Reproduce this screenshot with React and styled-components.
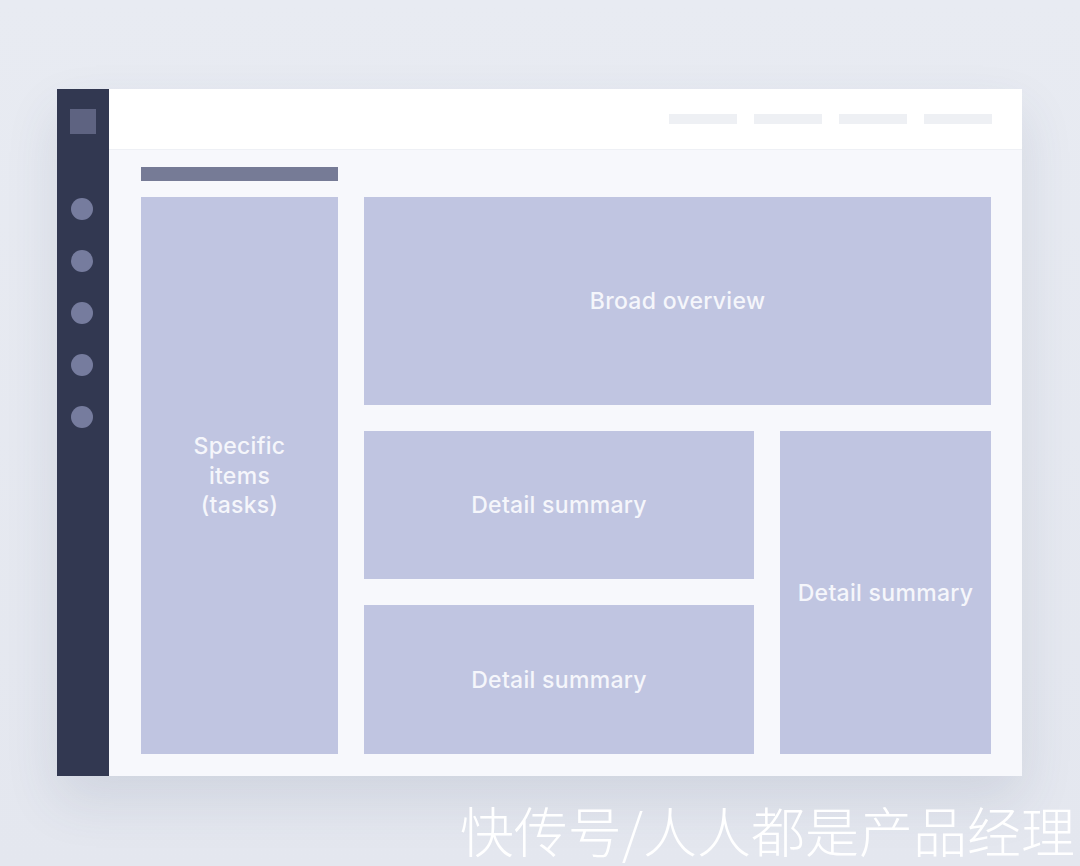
import styled, { createGlobalStyle } from "styled-components";

const GlobalStyle = createGlobalStyle`
  html, body {
    margin: 0;
    padding: 0;
    background: #e6e9f1;
  }
  body {
    font-family: "Inter", "Noto Sans", sans-serif;
  }
`;

const Page = styled.div`
  position: relative;
  width: 1080px;
  height: 866px;
  overflow: hidden;
  background: linear-gradient(180deg, #e8ebf2 0%, #e4e7ef 100%);
  padding: 89px 0 0 57px;
  box-sizing: border-box;
`;

const Window = styled.div`
  display: flex;
  width: 965px;
  height: 687px;
  box-shadow: 0 24px 50px rgba(60, 70, 110, 0.12);
`;

const Sidebar = styled.div`
  width: 52px;
  flex-shrink: 0;
  background: #323851;
  display: flex;
  flex-direction: column;
  align-items: center;
  padding-top: 20px;
  box-sizing: border-box;
`;

const Logo = styled.div`
  width: 26px;
  height: 25px;
  background: #5e6381;
  margin-bottom: 64px;
`;

const NavDots = styled.div`
  display: flex;
  flex-direction: column;
  gap: 30px;
  margin-right: 3px;
`;

const Dot = styled.div`
  width: 22px;
  height: 22px;
  border-radius: 50%;
  background: #767c9e;
`;

const Main = styled.div`
  flex: 1;
  display: flex;
  flex-direction: column;
  background: #f7f8fc;
`;

const TopBar = styled.div`
  height: 61px;
  background: #ffffff;
  border-bottom: 1px solid #eef0f5;
  display: flex;
  align-items: center;
  justify-content: flex-end;
  gap: 17px;
  padding-right: 30px;
  box-sizing: border-box;
`;

const NavPill = styled.div`
  width: 68px;
  height: 10px;
  background: #eef0f4;
`;

const Content = styled.div`
  padding: 17px 31px 0 32px;
`;

const Heading = styled.div`
  width: 197px;
  height: 14px;
  background: #767b96;
  margin-bottom: 16px;
`;

const Grid = styled.div`
  display: grid;
  grid-template-columns: 197px 390px 211px;
  grid-template-rows: 208px 148px 149px;
  gap: 26px;
`;

const Block = styled.div`
  background: #c0c5e1;
  color: #f5f6fb;
  font-size: 23px;
  font-weight: 500;
  letter-spacing: 0.3px;
  line-height: 29.5px;
  text-align: center;
  display: flex;
  align-items: center;
  justify-content: center;
  padding-top: 2px;
  box-sizing: border-box;
  grid-column: ${(p) => p.$col};
  grid-row: ${(p) => p.$row};
`;

const Watermark = styled.div`
  position: absolute;
  right: 5px;
  bottom: 5px;
  font-family: "Noto Sans CJK SC", sans-serif;
  font-weight: 300;
  font-size: 54px;
  line-height: 62px;
  color: #ffffff;
  white-space: nowrap;
`;

export default function App() {
  return (
    <Page>
      <GlobalStyle />
      <Window>
        <Sidebar>
          <Logo />
          <NavDots>
            {[0, 1, 2, 3, 4].map((i) => (
              <Dot key={i} />
            ))}
          </NavDots>
        </Sidebar>
        <Main>
          <TopBar>
            {[0, 1, 2, 3].map((i) => (
              <NavPill key={i} />
            ))}
          </TopBar>
          <Content>
            <Heading />
            <Grid>
              <Block $col="1" $row="1 / span 3">
                Specific
                <br />
                items
                <br />
                (tasks)
              </Block>
              <Block $col="2 / span 2" $row="1">
                Broad overview
              </Block>
              <Block $col="2" $row="2">
                Detail summary
              </Block>
              <Block $col="2" $row="3">
                Detail summary
              </Block>
              <Block $col="3" $row="2 / span 2">
                Detail summary
              </Block>
            </Grid>
          </Content>
        </Main>
      </Window>
      <Watermark>快传号/人人都是产品经理</Watermark>
    </Page>
  );
}
